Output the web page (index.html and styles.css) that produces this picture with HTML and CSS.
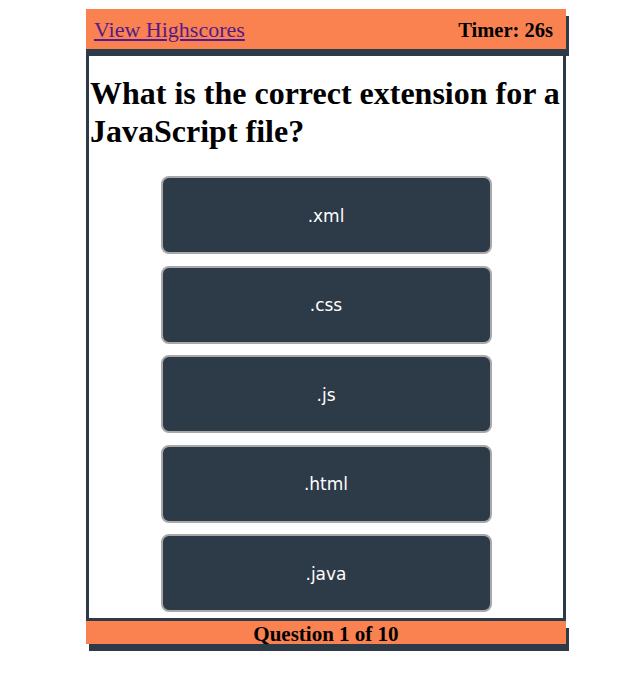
FILE: index.html
```html
<!DOCTYPE html>
<html lang="en">
<head>
  <meta charset="UTF-8">
  <meta name="viewport" content="width=device-width, initial-scale=1.0">
  <title>Code Quiz</title>
  <link rel="stylesheet" href="styles.css">
</head>
<body>
  <div class="quiz">
    <!-- Top bar -->
    <header class="topbar">
      <a href="#" class="scores-link">View Highscores</a>
      <span class="timer">Timer: 26s</span>
    </header>

    <!-- Question card -->
    <main class="card">
      <h1 class="question">What is the correct extension for a JavaScript file?</h1>
      <div class="answers">
        <button class="answer">.xml</button>
        <button class="answer">.css</button>
        <button class="answer">.js</button>
        <button class="answer">.html</button>
        <button class="answer">.java</button>
      </div>
    </main>

    <footer class="progress">Question 1 of 10</footer>
  </div>
</body>
</html>
```

FILE: styles.css
```css
/* --- Base --- */
*{box-sizing:border-box}
body{margin:0;font-family:"Liberation Serif","Times New Roman",serif;background:#fff;color:#000}
.quiz{width:480px;margin:9px 0 40px 86px;padding-bottom:10px}

/* --- Top bar --- */
.topbar{position:relative;z-index:1;display:flex;justify-content:space-between;align-items:center;height:40px;padding:2px 13px 0 8px;background:#fa8150;box-shadow:3px 7px 0 #2d3a48}
.scores-link{font-size:22px;color:#551a8b}
.timer{font-size:20.5px;font-weight:700}

/* --- Card --- */
.card{border:3px solid #2d3a48;padding:0;height:572px}
.question{margin:22px 0 26px 1px;font-size:32px;line-height:38px}
.answers{display:flex;flex-direction:column;align-items:center;gap:11.5px}
.answer{width:331px;height:78px;padding-top:2px;border:2px solid #a8a8a8;border-radius:8px;background:#2d3a48;color:#fff;font-family:"DejaVu Sans",Verdana,sans-serif;font-size:17px;cursor:pointer}

/* --- Footer --- */
.progress{position:relative;height:23px;background:#fa8150;box-shadow:3px 7px 0 #2d3a48;text-align:center;font-size:21px;font-weight:700;line-height:26px}
```
